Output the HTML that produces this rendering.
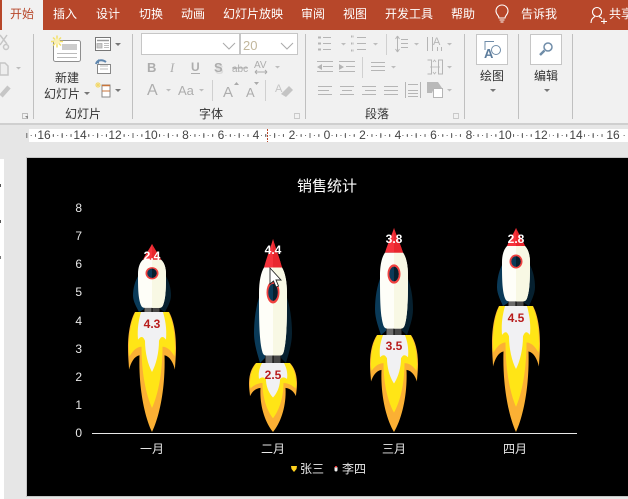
<!DOCTYPE html>
<html><head><meta charset="utf-8">
<style>
html,body{margin:0;padding:0;background:#e6e6e6}
body{width:628px;height:499px;overflow:hidden;position:relative}
svg{position:absolute;left:0;top:0;display:block}
text{font-family:"Liberation Sans","Noto Sans CJK SC",sans-serif}
</style></head>
<body>
<svg width="628" height="499" viewBox="0 0 628 499" xmlns="http://www.w3.org/2000/svg">
<defs>
<g id="flame">
<path d="M-17,0C-21,6-24,16-24,30C-24,38-23,44-23,48C-21,42-18,37-12.500,36C-13.500,62-8,86 0,100C8,86 13.500,62 12.500,36C18,37 21,42 23,48C23,44 24,38 24,30C24,16 21,6 17,0Z" fill="#FBB034"/>
<path d="M-16.500,0C-20,6-23.300,16-23,31C-23,33-22.800,35-22.500,37C-19,32-15,29-10.500,29C-10.500,52-5.500,70 0,80C5.500,70 10.500,52 10.500,29C15,29 19,32 22.500,37C22.800,35 23,33 23,31C23.300,16 20,6 16.500,0Z" fill="#FFE516"/>
<path d="M-11,0L11,0C13,6 15,13 14,23C11,20 9,20 7,24C7,34 4,44 0,50C-4,44-7,34-7,24C-9,20-11,20-14,23C-15,13-13,6-11,0Z" fill="#F1F1F3"/>
</g>
<g id="body">
<path d="M-13,45C-17,54-19,65-19,76C-19,85-15,94-13,100L-8,96L-8,45Z" fill="#0A3A58"/>
<path d="M13,45C17,54 19,65 19,76C19,85 15,94 13,100L8,96L8,45Z" fill="#06202F"/>
<rect x="-7.500" y="93" width="7" height="7" fill="#6B6B6B"/>
<rect x="0.500" y="93" width="7" height="7" fill="#474747"/>
<path d="M-9,23C-12,27-14,34-14,44C-14,62-14,80-11,90Q-10,94-7,94L7,94Q10,94 11,90C14,80 14,62 14,44C14,34 12,27 9,23Z" fill="#FEFEF8"/>
<path d="M0,23L0,94L7,94Q10,94 11,90C14,80 14,62 14,44C14,34 12,27 9,23Z" fill="#F8F8E4"/>
<path d="M0,0C-2,6-6,14-9,23L9,23C6,14 2,6 0,0Z" fill="#F6333C"/>
<path d="M0,0L0,23L9,23C6,14 2,6 0,0Z" fill="#E9272E"/>
<ellipse cx="0" cy="43" rx="6.500" ry="9" fill="#F0413F"/>
<ellipse cx="0" cy="43" rx="4.700" ry="6.800" fill="#0A3A58"/>
<path d="M0,36.200V49.800A4.700,6.800 0 0 0 0,36.200Z" fill="#06202F"/>
</g>
<g id="smallarrow"><path d="M0,0h6l-3,3z" fill="#777"/></g>
<g id="ga"><path d="M0,0h5l-2.500,2.500z" fill="#bdbdbd"/></g>
</defs>

<!-- background -->
<rect width="628" height="499" fill="#E6E6E6"/>
<!-- top bar -->
<rect width="628" height="30" fill="#B7472A"/>
<rect x="2" y="0" width="41" height="31" fill="#F1F1F1"/>
<g font-size="12" fill="#fff">
<text x="10" y="18" fill="#B7472A">开始</text>
<text x="53" y="18">插入</text>
<text x="96" y="18">设计</text>
<text x="139" y="18">切换</text>
<text x="181" y="18">动画</text>
<text x="223" y="18">幻灯片放映</text>
<text x="301" y="18">审阅</text>
<text x="343" y="18">视图</text>
<text x="385" y="18">开发工具</text>
<text x="451" y="18">帮助</text>
<text x="521" y="18">告诉我</text>
<text x="609" y="18">共享</text>
</g>
<!-- bulb -->
<g fill="none" stroke="#fff" stroke-width="1.100">
<path d="M499,18C499,15.500 496,14.500 496,11A6,6 0 0 1 508,11C508,14.500 505,15.500 505,18Z"/>
<path d="M499.500,20H504.500M500.500,22H503.500"/>
<!-- person -->
<circle cx="597" cy="12" r="4.500"/>
<path d="M591,23C591,19 593,17.500 595,16.500M599,16.500C600,17 601,17.500 602,18.500"/>
<path d="M601,21.500H607M604,18.500V24"/>
</g>

<!-- ribbon -->
<rect y="30" width="628" height="93" fill="#F1F1F1"/>
<rect y="123" width="628" height="2" fill="#CFCFCF"/>
<g fill="#C0C0C0">
<rect x="33" y="34" width="1" height="85"/>
<rect x="132" y="34" width="1" height="85"/>
<rect x="305" y="34" width="1" height="85"/>
<rect x="464" y="34" width="1" height="85"/>
<rect x="518" y="34" width="1" height="85"/>
<rect x="572" y="34" width="1" height="85"/>
</g>
<!-- clipboard -->
<g fill="none" stroke="#C6C6C6" stroke-width="1.500">
<path d="M0,35L7,44M7,35L0,45"/><circle cx="6" cy="47" r="2.500"/>
<path d="M0,63H5L8,66V75H0Z" fill="#eee"/>
<path d="M1,96L9,87" stroke-width="4.500"/>
</g>
<use href="#ga" x="16" y="67"/>
<!-- new slide -->
<rect x="53.500" y="40.500" width="27" height="21" rx="2" fill="#fff" stroke="#8E8E8E"/>
<rect x="62" y="44" width="15" height="6" fill="#CCC"/>
<path d="M57,53.500H77M57,57.500H77" stroke="#BBB"/>
<g stroke="#F2E06A" stroke-width="1.500"><path d="M51,41.500H63M57,35.500V47.500M53,37.500L61,45.500M61,37.500L53,45.500"/></g>
<circle cx="57" cy="41.500" r="3" fill="#FBF0B4"/>
<g font-size="12" fill="#333">
<text x="55" y="82">新建</text>
<text x="44" y="98">幻灯片</text>
<text x="65" y="118">幻灯片</text>
<text x="199" y="118">字体</text>
<text x="365" y="118">段落</text>
<text x="480" y="80">绘图</text>
<text x="534" y="80">编辑</text>
</g>
<use href="#smallarrow" x="84" y="92"/>
<!-- layout icons -->
<rect x="95.500" y="37.500" width="15" height="13" fill="#fff" stroke="#777"/>
<path d="M97,40.500H109" stroke="#999" stroke-width="1.500"/><path d="M97,43.500H102V48H97ZM104,43.500H109M104,45.500H109M104,47.500H109" fill="#ccc" stroke="#aaa" stroke-width=".8"/>
<use href="#smallarrow" x="115" y="43"/>
<rect x="97.500" y="64.500" width="13" height="9" fill="#fff" stroke="#888"/>
<path d="M96,64C97,60 102,59 106,62" fill="none" stroke="#5F86AE" stroke-width="2"/>
<path d="M100,66H108M100,69H108" stroke="#bbb"/>
<path d="M96,62l3,-3v5z" fill="#5F86AE"/>
<path d="M102,85H110V97H102Z" fill="#fff" stroke="#888"/>
<path d="M102,85.500H110" stroke="#C9753B" stroke-width="1.500"/><path d="M102,91H110" stroke="#C9753B"/>
<path d="M95,85H101M98,82V88M96,83L100,87M100,83L96,87" stroke="#F2D868"/>
<use href="#smallarrow" x="115" y="89"/>
<path d="M22.500,113.500h5v5h-5z" fill="none" stroke="#aaa" stroke-width=".7"/><path d="M25,116l3,3v-3z" fill="#888"/>
<!-- font boxes -->
<rect x="141.500" y="33.500" width="98" height="21" fill="#fff" stroke="#C6C6C6"/>
<rect x="240.500" y="33.500" width="57" height="21" fill="#fff" stroke="#C6C6C6"/>
<path d="M223,43L229,49L235,43M281,43L287,49L293,43" fill="none" stroke="#AAA"/>
<text x="243" y="50" font-size="13" fill="#C2B79C">20</text>
<g fill="#ADADAD">
<text x="147" y="72" font-size="13" font-weight="bold">B</text>
<text x="170" y="72" font-size="13" font-style="italic" style="font-family:'Liberation Serif'">I</text>
<text x="191" y="71" font-size="12" font-weight="bold">U</text>
<rect x="191" y="73" width="9" height="1"/>
<text x="215" y="74" font-size="13" font-weight="bold" fill="#DDD">S</text>
<text x="214" y="72" font-size="13" font-weight="bold">S</text>
<text x="232" y="72" font-size="10">abc</text>
<rect x="232" y="67.500" width="16" height="1"/>
<text x="254" y="68" font-size="10">AV</text>
<text x="147" y="95" font-size="16">A</text>
<text x="178" y="95" font-size="13">Aa</text>
<text x="223" y="97" font-size="15">A</text>
<text x="246" y="97" font-size="13">A</text>
<text x="275" y="92" font-size="11" fill="#C4C4C4">A</text>
</g>
<path d="M255,72H267M255,72l2,-2M255,72l2,2M267,72l-2,-2M267,72l-2,2" stroke="#AAA" fill="none"/>
<use href="#ga" x="275" y="66"/><use href="#ga" x="166" y="89"/><use href="#ga" x="199" y="89"/>
<path d="M234,85l2.500,-3l2.500,3zM254,82l2.500,3l2.500,-3z" fill="#AAA"/>
<path d="M212.500,80V101M265.500,80V101" stroke="#D0D0D0"/>
<path d="M281,94L289,86L293,90L286,97Z" fill="#C4C4C4"/>
<path d="M294.500,113.500h5v5h-5z" fill="none" stroke="#bbb" stroke-width=".7"/>
<!-- paragraph -->
<g stroke="#B5B5B5" fill="none">
<path d="M318,37.500h3M318,43.500h3M318,49.500h3" stroke-width="2"/>
<path d="M323,37.500H331M323,43.500H331M323,49.500H331"/>
<path d="M357,37.500H366M357,43.500H366M357,49.500H366"/>
<path d="M351,36.500h3M351,43.500h3M351,50.500h3" stroke-width="2" stroke-dasharray="1 .5"/>
<path d="M386.500,34V55M362.500,57V78" stroke="#D0D0D0"/>
<path d="M397.500,36V52M397.500,36l-2,3M397.500,36l2,3M397.500,52l-2,-3M397.500,52l2,-3"/>
<path d="M401,39.500H408M401,43.500H408M401,47.500H408"/>
<path d="M427.500,37V51M432.500,37V51M437.500,47V51M441.500,47V51"/>
<path d="M317,61.500H333M323,66.500H333M317,71.500H333M339,61.500H355M346,66.500H355M339,71.500H355"/>
<path d="M371,62.500H385M371,66.500H385M371,70.500H385"/>
<path d="M427.500,60h4v14h-4M442.500,60h-4v14h4z"/>
<path d="M433,62l1.500,-2l1.500,2M433,72l1.500,2l1.500,-2M430,67H440" stroke-width=".8"/>
<path d="M318,86.500H332M318,90.500H329M318,94.500H332"/>
<path d="M340,86.500H354M342,90.500H352M340,94.500H354"/>
<path d="M362,86.500H376M365,90.500H376M362,94.500H376"/>
<path d="M384,86.500H398M384,90.500H398M384,94.500H398"/>
<path d="M405.500,82V98M420.500,82V98M408,84.500H418M408,90.500H418M408,93.500H418M408,96.500H418"/>
<rect x="433.500" y="88.500" width="9" height="9" fill="#fff"/>
</g>
<path d="M317,67l5,-3v6zM339,64l5,3l-5,3z" fill="#B5B5B5"/>
<path d="M427,82H438L442,88H434L432,93H427Z" fill="#B9B9B9"/>
<text x="433" y="45" font-size="11" fill="#B5B5B5">A</text>
<use href="#ga" x="341" y="43"/><use href="#ga" x="373" y="43"/><use href="#ga" x="414" y="43"/><use href="#ga" x="447" y="43"/>
<use href="#ga" x="391" y="66"/><use href="#ga" x="447" y="66"/><use href="#ga" x="447" y="89"/>
<path d="M453.500,113.500h5v5h-5z" fill="none" stroke="#bbb" stroke-width=".7"/>
<!-- drawing, editing -->
<rect x="476.500" y="34.500" width="31" height="30" fill="#fff" stroke="#C6C6C6"/>
<path d="M485,50V41.500H494" fill="none" stroke="#6F8CA8"/>
<circle cx="496" cy="50" r="4.500" fill="#fff" stroke="#6F8CA8"/>
<text x="484" y="58" font-size="13" font-weight="bold" fill="#5C7C9C">A</text>
<use href="#smallarrow" x="490" y="89"/>
<rect x="530.500" y="34.500" width="31" height="30" fill="#fff" stroke="#C6C6C6"/>
<circle cx="548" cy="47" r="4" fill="#fff" stroke="#6F8CA8" stroke-width="1.500"/>
<path d="M544.500,50.500L540,55" stroke="#6F8CA8" stroke-width="2.500"/>
<use href="#smallarrow" x="544" y="89"/>

<!-- ruler -->
<rect x="29" y="129" width="599" height="13" fill="#fff"/>
<g stroke="#666" fill="none">
<path d="M30.700,135.500H628" stroke-dasharray="1 3.425"/>
<path d="M35.150,135.500H628" stroke-width="3" stroke-dasharray="1 7.850"/>
<path d="M26.300,135.500H628" stroke-width="5" stroke-dasharray="1 16.700"/>
</g>
<path d="M267.500,129V142" stroke="#B7472A" stroke-dasharray="2 1"/>
<g fill="#fff">
<rect x="36" y="130" width="16" height="11"/><rect x="72" y="130" width="16" height="11"/><rect x="107" y="130" width="16" height="11"/><rect x="143" y="130" width="16" height="11"/><rect x="181" y="130" width="9" height="11"/><rect x="216" y="130" width="9" height="11"/><rect x="252" y="130" width="9" height="11"/><rect x="287" y="130" width="9" height="11"/><rect x="322" y="130" width="9" height="11"/><rect x="358" y="130" width="9" height="11"/><rect x="393" y="130" width="9" height="11"/><rect x="429" y="130" width="9" height="11"/><rect x="464" y="130" width="9" height="11"/><rect x="497" y="130" width="16" height="11"/><rect x="533" y="130" width="16" height="11"/><rect x="568" y="130" width="16" height="11"/><rect x="605" y="130" width="16" height="11"/>
</g>
<g font-size="12" fill="#444" text-anchor="middle">
<text x="44" y="139">16</text><text x="80" y="139">14</text><text x="115" y="139">12</text><text x="151" y="139">10</text><text x="185.500" y="139">8</text><text x="221" y="139">6</text><text x="256" y="139">4</text><text x="292" y="139">2</text><text x="327" y="139">0</text><text x="362.500" y="139">2</text><text x="398" y="139">4</text><text x="433.500" y="139">6</text><text x="469" y="139">8</text><text x="505" y="139">10</text><text x="541" y="139">12</text><text x="576" y="139">14</text><text x="613" y="139">16</text>
</g>

<!-- left panel -->
<rect x="0" y="159" width="4" height="340" fill="#fff"/>
<rect x="0" y="184" width="1" height="3" fill="#555"/><rect x="0" y="220" width="1" height="3" fill="#555"/><rect x="0" y="256" width="1" height="3" fill="#777"/>

<!-- slide -->
<rect x="26.500" y="157.500" width="602" height="339" fill="#000" stroke="#C6C6C6"/>
<text x="327" y="191" text-anchor="middle" font-size="15" fill="#fff">销售统计</text>
<g font-size="12" fill="#E8E8E8" text-anchor="end">
<text x="82" y="212">8</text><text x="82" y="240">7</text><text x="82" y="268">6</text><text x="82" y="296">5</text><text x="82" y="325">4</text><text x="82" y="353">3</text><text x="82" y="381">2</text><text x="82" y="409">1</text><text x="82" y="437">0</text>
</g>
<rect x="92" y="433" width="485" height="1" fill="#E8E8E8"/>

<!-- rockets -->
<g transform="translate(152,312) scale(1,1.200)"><use href="#flame"/></g>
<g transform="translate(152,244) scale(1,.680)"><use href="#body"/></g>
<g transform="translate(273,363) scale(1,.690)"><use href="#flame"/></g>
<g transform="translate(273,239) scale(1,1.240)"><use href="#body"/></g>
<g transform="translate(394,335) scale(1,.970)"><use href="#flame"/></g>
<g transform="translate(394,228) scale(1,1.070)"><use href="#body"/></g>
<g transform="translate(516,306) scale(1,1.260)"><use href="#flame"/></g>
<g transform="translate(516,228) scale(1,.780)"><use href="#body"/></g>

<g font-size="12" font-weight="bold" text-anchor="middle">
<text x="152" y="260" fill="#fff">2.4</text><text x="152" y="328" fill="#B81C1C">4.3</text>
<text x="273" y="254" fill="#fff">4.4</text><text x="273" y="379" fill="#B81C1C">2.5</text>
<text x="394" y="243" fill="#fff">3.8</text><text x="394" y="350" fill="#B81C1C">3.5</text>
<text x="516" y="243" fill="#fff">2.8</text><text x="516" y="322" fill="#B81C1C">4.5</text>
</g>

<!-- cursor -->
<path d="M270,268V284L273.500,281L276,287L278.500,286L276,280L281,280Z" fill="#fff" stroke="#222" stroke-width=".9"/>

<g font-size="12" fill="#E8E8E8" text-anchor="middle">
<text x="152" y="453">一月</text><text x="273" y="453">二月</text><text x="394" y="453">三月</text><text x="515" y="453">四月</text>
</g>
<g font-size="12" fill="#E8E8E8">
<text x="300" y="473">张三</text><text x="342" y="473">李四</text>
</g>
<path d="M291,466H297L296.500,469L294,472L291.500,469Z" fill="#FFD21E"/>
<rect x="334.500" y="466.500" width="3" height="5" rx="1.500" fill="#eee"/><rect x="335" y="466" width="2" height="1.500" fill="#E33"/>
</svg>
</body></html>
